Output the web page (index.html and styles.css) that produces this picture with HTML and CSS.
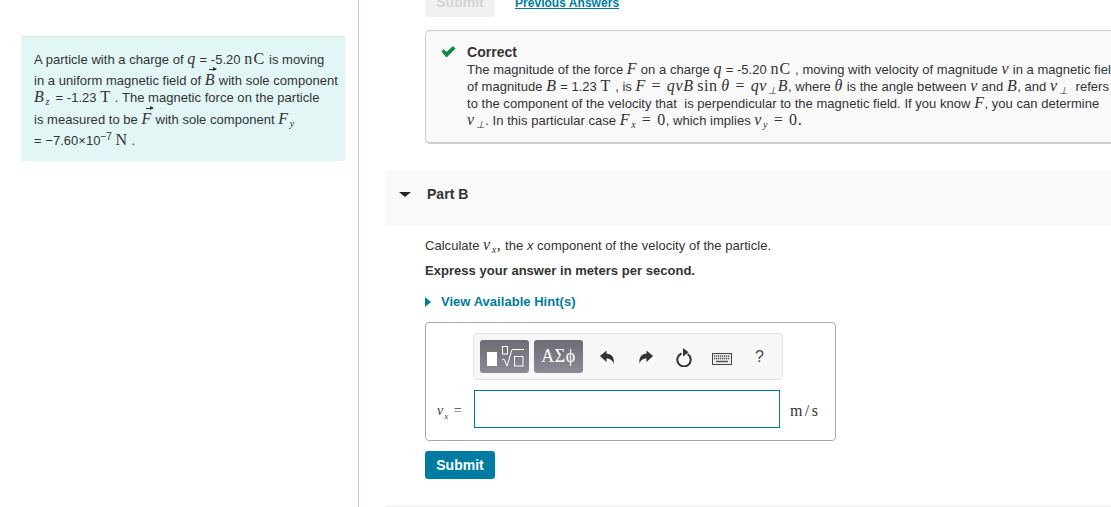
FILE: index.html
```html
<!DOCTYPE html>
<html>
<head>
<title>Part B</title>
<link rel="stylesheet" href="styles.css">
</head>
<body>

<div class="page">
  <div class="left-col">
    <div class="intro">
      <div class="line l1">A particle with a charge of <i class="m big">q</i> = -5.20 <span class="m big up">nC</span> is moving</div>
      <div class="line l2">in a uniform magnetic field of <i class="m big vec">B</i> with sole component</div>
      <div class="line l3"><i class="m big">B<sub>z</sub></i> <span class="eq-gap">=</span> -1.23 <span class="m big up">T</span> . The magnetic force on the particle</div>
      <div class="line l4">is measured to be <i class="m big vec">F</i> with sole component <i class="m big">F<sub>y</sub></i></div>
      <div class="line l5">= &minus;7.60&times;10<sup>&minus;7</sup> <span class="m big">N</span> .</div>
    </div>
  </div>

  <div class="right-col">
    <div class="top-actions">
      <span class="btn-disabled">Submit</span>
      <a class="prev-link">Previous Answers</a>
    </div>

    <div class="feedback">
      <svg class="check" width="15" height="12" viewBox="0 0 15 12"><path d="M.5 5.500l2.200-2.200 2.800 2.800L12 0l2.500 2.500L5.500 11.500z" fill="#0a8a3c"/></svg>
      <div class="feedback-text">
        <div class="fb-title">Correct</div>
        <div class="fb-line">The magnitude of the force <i class="m big">F</i> on a charge <i class="m big">q</i> = -5.20 <span class="m big up">nC</span> , moving with velocity of magnitude <i class="m big">v</i> in a magnetic field</div>
        <div class="fb-line">of magnitude <i class="m big">B</i> = 1.23 <span class="m big up">T</span> , is <i class="m big">F</i> <span class="m big eq">=</span> <i class="m big">qvB</i> <span class="m big">sin</span> <i class="m big">&theta;</i> <span class="m big eq">=</span> <i class="m big">qv<sub>&perp;</sub>B</i>, where <i class="m big">&theta;</i> is the angle between <i class="m big">v</i> and <i class="m big">B</i>, and <i class="m big">v<sub>&perp;</sub></i> &nbsp;refers</div>
        <div class="fb-line">to the component of the velocity that &nbsp;is perpendicular to the magnetic field. If you know <i class="m big">F</i>, you can determine</div>
        <div class="fb-line"><i class="m big">v<sub>&perp;</sub></i>. In this particular case <i class="m big">F<sub>x</sub></i> <span class="m big eq">=</span> <span class="m big">0</span>, which implies <i class="m big">v<sub>y</sub></i> <span class="m big eq">=</span> <span class="m big">0.</span></div>
      </div>
    </div>

    <div class="part-header">
      <span class="caret-down"></span>
      <span class="part-title">Part B</span>
    </div>

    <div class="part-body">
      <div class="question">Calculate <i class="m big">v<sub>x</sub></i><span class="m big">,</span> the <i>x</i> component of the velocity of the particle.</div>
      <div class="express">Express your answer in meters per second.</div>
      <div class="hint"><span class="caret-right"></span>View Available Hint(s)</div>

      <div class="answer-box">
        <div class="toolbar">
          <span class="tool-btn templates">
            <svg width="49" height="33" viewBox="0 0 49 33">
              <rect x="7" y="12" width="10" height="14" fill="#fff"/>
              <rect x="22.500" y="6.500" width="5" height="7.500" fill="none" stroke="#fff"/>
              <path d="M22 20l2-1 3 7 5-16.500h12" fill="none" stroke="#fff"/>
              <rect x="34.500" y="16.500" width="8.500" height="9.500" fill="none" stroke="#fff"/>
            </svg>
          </span>
          <span class="tool-btn greek">&Alpha;&Sigma;&straightphi;</span>
          <svg class="tool-icon undo" width="14" height="14" viewBox="0 0 14 14"><path d="M0 6L6.500.5v3.200c4.500 0 8.300 3 7 10C12.500 10 10 8.500 6.500 8.500V12z" fill="#333"/></svg>
          <svg class="tool-icon redo" width="14" height="14" viewBox="0 0 14 14"><path d="M14 6L7.500.5v3.200C3 3.700-.3 6.700.5 13.700 1.500 10 4 8.500 7.500 8.500V12z" fill="#333"/></svg>
          <svg class="tool-icon reset" width="16" height="19" viewBox="0 0 16 19"><path d="M5.500 5.500A6.700 6.700 0 1 0 11.500 6" fill="none" stroke="#333" stroke-width="2"/><path d="M7 0l5.500 4.200L7 8.500z" fill="#333"/></svg>
          <svg class="tool-icon keys" width="20" height="12" viewBox="0 0 20 12">
            <rect x=".5" y=".5" width="19" height="11" fill="#eee" stroke="#444"/>
            <path d="M2 3h16M2 5.500h16" stroke="#555" stroke-width="1.300" stroke-dasharray="1.300 .7"/>
            <path d="M4 8.500h12" stroke="#555" stroke-width="1.500"/>
          </svg>
          <span class="help">?</span>
        </div>
        <div class="input-row">
          <span class="var-label"><i>v<sub>x</sub></i> =</span>
          <div class="answer-input"></div>
          <span class="unit">m/s</span>
        </div>
      </div>

      <button class="submit-btn">Submit</button>
    </div>
    <div class="bottom-rule"></div>
  </div>
</div>

</body>
</html>
```

FILE: styles.css
```css
html, body {
  margin: 0;
  height: 507px;
  overflow: hidden;
  background: #fff;
}

body {
  font-family: "Liberation Sans", Arial, sans-serif;
  font-size: 13px;
  letter-spacing: .03px;
  color: #333;
}

.page {
  display: flex;
  width: 1111px;
  height: 507px;
}

/* math bits */
.m {
  font-family: "Liberation Serif", serif;
  font-size: 14px;
}

.big {
  font-size: 16px;
  letter-spacing: .6px;
}

.up {
  letter-spacing: 1.200px;
}

.eq {
  margin: 0 2px;
}

.eq-gap {
  margin-left: 2px;
}

.m sub {
  font-size: 10px;
  line-height: 0;
  vertical-align: -3px;
  margin-left: 1px;
}

sup {
  font-size: 10px;
  line-height: 0;
}

.vec {
  position: relative;
  display: inline-block;
  line-height: 1;
}

.vec::before {
  content: "";
  position: absolute;
  left: 4px;
  top: -3px;
  width: 7px;
  height: 1px;
  background: #333;
}

.vec::after {
  content: "";
  position: absolute;
  left: 8px;
  top: -5px;
  border-left: 4px solid #333;
  border-top: 2.500px solid transparent;
  border-bottom: 2.500px solid transparent;
}

/* left column */
.left-col {
  flex: none;
  width: 324px;
  border-right: 1px solid #bcc9de;
  padding: 36px 13px 0 21px;
}

.intro {
  height: 124px;
  padding: 0 0 0 13px;
  background: #e2f6f6;
  border-top: 1px solid #dfe3e3;
  white-space: nowrap;
}

.line {
  height: 21px;
  line-height: 21px;
}

.l1 { padding-top: 11px; height: 22px; }
.l2 { height: 18px; }
.l3 { height: 18px; line-height: 18px; }
.l4 { height: 25px; line-height: 25px; }
.l5 { height: 18px; line-height: 18px; }

/* right column */
.right-col {
  flex: 1;
  min-width: 0;
  padding-left: 26px;
  overflow: hidden;
  white-space: nowrap;
}

.top-actions {
  height: 17px;
  margin-left: 40px;
  display: flex;
  align-items: flex-end;
  overflow: hidden;
}

.btn-disabled {
  width: 70px;
  height: 28px;
  flex: none;
  background: #f0f0f0;
  border-radius: 3px;
  color: #d4d4d4;
  font-size: 14px;
  font-weight: bold;
  line-height: 16px;
  display: flex;
  align-items: flex-end;
  justify-content: center;
  padding-bottom: 7px;
  box-sizing: border-box;
}

.prev-link {
  margin: 0 0 7px 20px;
  color: #007c9f;
  font-size: 12px;
  font-weight: bold;
  text-decoration: underline;
  line-height: 14px;
}

.feedback {
  margin: 13px 0 0 40px;
  width: 720px;
  height: 114px;
  box-sizing: border-box;
  border: 1px solid #ccc;
  border-bottom-width: 2px;
  border-right: none;
  border-radius: 5px 0 0 5px;
  background: #f9f9f9;
  display: flex;
  padding: 14px 0 0 15px;
}

.check {
  flex: none;
  margin-top: 1px;
}

.feedback-text {
  margin-left: 11px;
}

.fb-title {
  font-size: 14px;
  font-weight: bold;
  line-height: 15px;
  color: #333;
}

.fb-line {
  height: 17px;
  line-height: 17px;
  font-size: 13px;
}

.part-header {
  margin-top: 26px;
  height: 56px;
  background: #f9f9f9;
  display: flex;
  align-items: center;
  padding-left: 14px;
  padding-bottom: 8px;
  box-sizing: border-box;
}

.caret-down {
  width: 0;
  height: 0;
  border-top: 5px solid #222;
  border-left: 6px solid transparent;
  border-right: 6px solid transparent;
}

.part-title {
  margin-left: 16px;
  font-size: 14px;
  font-weight: bold;
  color: #333;
}

.part-body {
  padding: 10px 0 0 40px;
}

.question {
  height: 18px;
  line-height: 18px;
}

.express {
  margin-top: 8px;
  height: 18px;
  line-height: 18px;
  font-weight: bold;
}

.hint {
  margin-top: 13px;
  height: 18px;
  line-height: 18px;
  color: #007c9f;
  font-weight: bold;
  display: flex;
  align-items: center;
}

.caret-right {
  width: 0;
  height: 0;
  margin-right: 10px;
  border-left: 6px solid #007c9f;
  border-top: 5px solid transparent;
  border-bottom: 5px solid transparent;
}

.answer-box {
  margin-top: 11px;
  width: 411px;
  height: 119px;
  box-sizing: border-box;
  border: 1px solid #aaa;
  border-radius: 4px;
  padding: 10px 0 0 47px;
}

.toolbar {
  width: 310px;
  height: 47px;
  box-sizing: border-box;
  background: #f7f7f7;
  border: 1px solid #e2e2e2;
  border-radius: 4px;
  display: flex;
  align-items: center;
  padding-left: 6px;
}

.tool-btn {
  width: 49px;
  height: 33px;
  flex: none;
  border-radius: 3px;
  background: linear-gradient(#6d6c74, #8c8b94);
  color: #fff;
  display: flex;
  align-items: center;
  justify-content: center;
}

.templates {
  margin-right: 5px;
}

.greek {
  font-family: "Liberation Serif", serif;
  font-size: 18px;
  letter-spacing: .5px;
}

.tool-icon {
  flex: none;
}

.undo { margin-left: 17px; }
.redo { margin-left: 25px; }
.reset { margin-left: 23px; margin-top: 1px; }
.keys { margin-left: 20px; margin-top: 4px; }

.help {
  margin-left: 23px;
  font-size: 16px;
  color: #444;
}

.input-row {
  margin-top: 10px;
  display: flex;
  align-items: center;
  margin-left: -36px;
}

.var-label {
  width: 37px;
  flex: none;
  padding-top: 3px;
  font-family: "Liberation Serif", serif;
  font-size: 14px;
  letter-spacing: 1px;
  color: #444;
}

.var-label sub {
  font-size: 9px;
  line-height: 0;
}

.answer-input {
  width: 306px;
  height: 38px;
  flex: none;
  box-sizing: border-box;
  border: 1px solid #007c9f;
  background: #fff;
}

.unit {
  margin-left: 10px;
  padding-top: 3px;
  font-family: "Liberation Serif", serif;
  font-size: 16px;
  letter-spacing: 2.400px;
  color: #333;
}

.submit-btn {
  display: block;
  margin-top: 10px;
  width: 70px;
  height: 28px;
  border: none;
  border-radius: 3px;
  background: #007ca3;
  color: #fff;
  font-family: "Liberation Sans", Arial, sans-serif;
  font-size: 14px;
  font-weight: bold;
  padding: 0;
}

.bottom-rule {
  margin-top: 26px;
  height: 2px;
  background: #f6f6f6;
}
```
